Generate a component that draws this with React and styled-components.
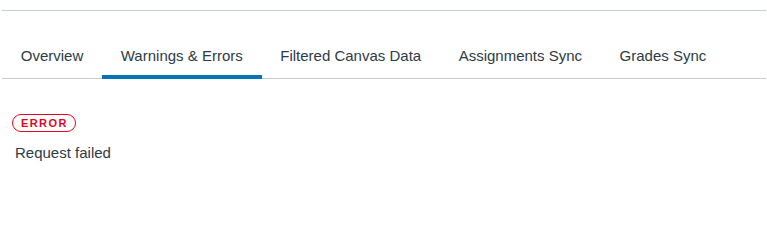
import React from 'react';
import styled, { createGlobalStyle } from 'styled-components';

const GlobalStyle = createGlobalStyle`
  body {
    margin: 0;
    background: #ffffff;
    font-family: "Liberation Sans", Arial, sans-serif;
    color: #2d3b45;
  }
`;

const Page = styled.div`
  padding: 10px 1px 0 2px;
`;

const Rule = styled.div`
  border-top: 1px solid #c7cdd1;
`;

const TabList = styled.div`
  display: flex;
  margin-top: 22px;
  border-bottom: 1px solid #c7cdd1;
`;

const Tab = styled.div`
  padding: 13px 18.75px 9px;
  margin-bottom: -1px;
  font-size: 15px;
  line-height: 20px;
  color: #2d3b45;
  border-bottom: 4px solid ${props => (props.active ? '#0374b5' : 'transparent')};
  white-space: nowrap;
  cursor: pointer;
`;

const Panel = styled.div`
  padding: 34px 10px 0 10px;
`;

const Pill = styled.span`
  display: inline-flex;
  align-items: center;
  height: 18px;
  box-sizing: border-box;
  padding: 0 7px 0 8px;
  border: 1px solid #e0061f;
  border-radius: 999px;
  color: #e0061f;
  font-size: 11px;
  font-weight: bold;
  letter-spacing: 1.4px;
  text-transform: uppercase;
`;

const Message = styled.p`
  margin: 11px 0 0 3px;
  font-size: 15px;
  line-height: 20px;
  color: #2d3b45;
`;

const tabs = [
  'Overview',
  'Warnings & Errors',
  'Filtered Canvas Data',
  'Assignments Sync',
  'Grades Sync'
];

export default function App() {
  return (
    <Page>
      <GlobalStyle />
      <Rule />
      <TabList>
        {tabs.map(t => (
          <Tab key={t} active={t === 'Warnings & Errors'}>
            {t}
          </Tab>
        ))}
      </TabList>
      <Panel>
        <Pill>Error</Pill>
        <Message>Request failed</Message>
      </Panel>
    </Page>
  );
}
